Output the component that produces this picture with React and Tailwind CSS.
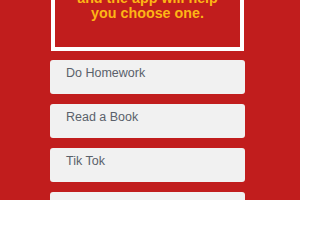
import React from "react";

const items = ["Do Homework", "Read a Book", "Tik Tok", "Go Sleep"];

export default function App() {
  return (
    <div className="w-[300px] h-[200px] overflow-hidden bg-[#c11d1d]">
      <div className="ml-[50px] w-[195px] flex flex-col">
        <div
          className="mt-[-63px] mx-[1px] border-4 border-white pt-[20px] pb-[26px] text-center text-[14.3px] leading-[15px] font-bold text-[#fdb515]"
          style={{ fontFamily: '"Liberation Sans", Arial, sans-serif' }}
        >
          <div>Can't decide what to do?</div>
          <div>List your choices below</div>
          <div>and the app will help</div>
          <div>you choose one.</div>
        </div>
        <div className="mt-[9px] flex flex-col gap-[10px]">
          {items.map((t) => (
            <div
              key={t}
              className="h-[34px] shrink-0 rounded-[3px] bg-[#f1f1f1] pl-[16px] pt-[6px] text-[12.5px] leading-[15px] text-[#5a616b]"
              style={{ fontFamily: '"Liberation Sans", Arial, sans-serif' }}
            >
              {t}
            </div>
          ))}
        </div>
      </div>
    </div>
  );
}
